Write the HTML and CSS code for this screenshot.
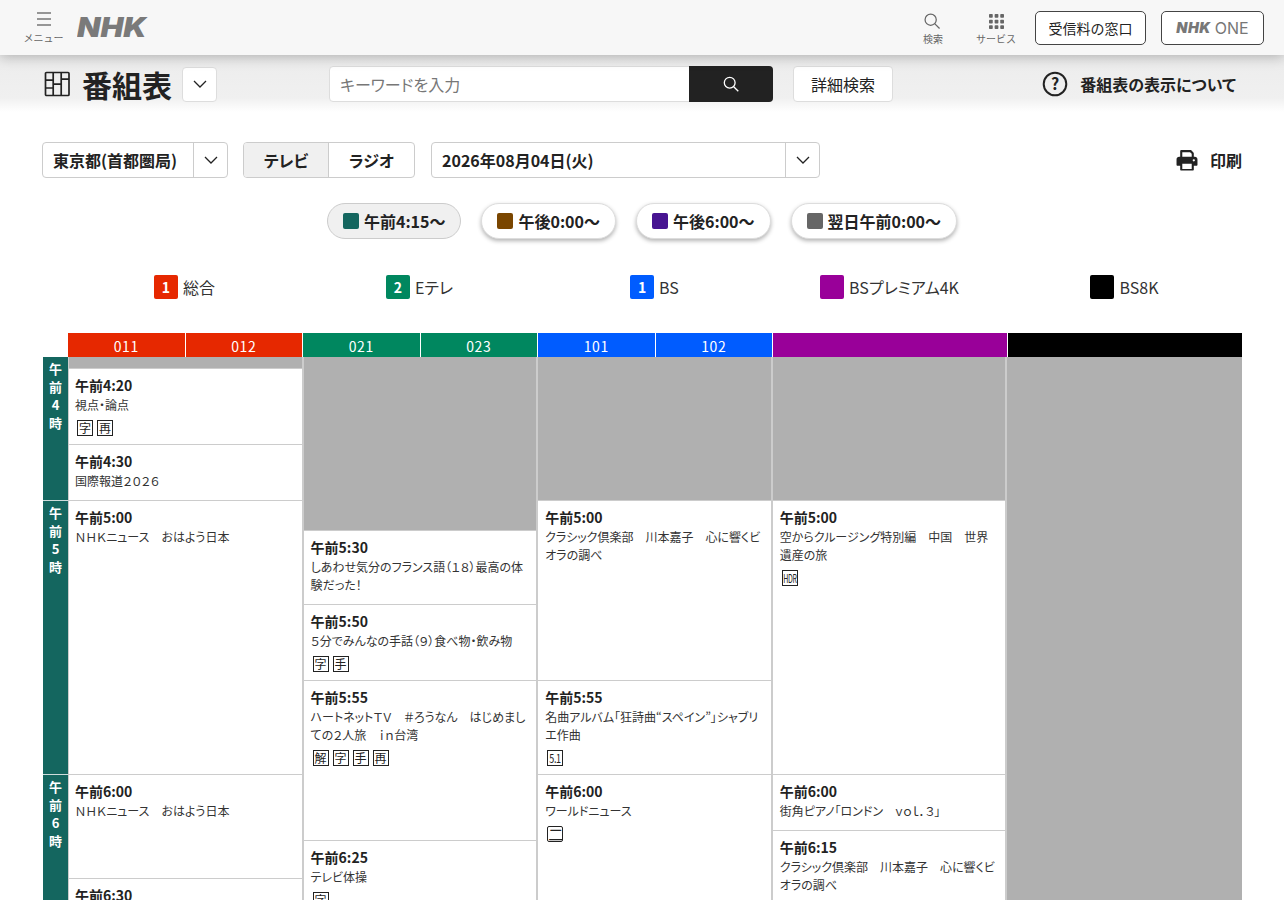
FILE: index.html
```html
<!DOCTYPE html>
<html lang="ja">
<head>
<meta charset="utf-8">
<title>番組表</title>
<link rel="stylesheet" href="styles.css">
</head>
<body>
<div class="page">
<header class="top">
  <div class="tool menu">
    <svg width="16" height="16" viewBox="0 0 16 16"><path d="M1 2h14M1 8h14M1 14h14" stroke="#777" stroke-width="1.3" fill="none"/></svg>
    <span>メニュー</span>
  </div>
  <span class="logo">NHK</span>
  <div class="top-right">
    <div class="tool t-search">
      <svg width="16" height="16" viewBox="0 0 18 18"><circle cx="7.500" cy="7.500" r="6.300" stroke="#666" stroke-width="1.400" fill="none"/><path d="M12 12l5.500 5.500" stroke="#666" stroke-width="1.400"/></svg>
      <span>検索</span>
    </div>
    <div class="tool t-service">
      <svg width="15" height="15" viewBox="0 0 16 16" fill="#666"><rect x="0" y="0" width="4" height="4" rx=".8"/><rect x="6" y="0" width="4" height="4" rx=".8"/><rect x="12" y="0" width="4" height="4" rx=".8"/><rect x="0" y="6" width="4" height="4" rx=".8"/><rect x="6" y="6" width="4" height="4" rx=".8"/><rect x="12" y="6" width="4" height="4" rx=".8"/><rect x="0" y="12" width="4" height="4" rx=".8"/><rect x="6" y="12" width="4" height="4" rx=".8"/><rect x="12" y="12" width="4" height="4" rx=".8"/></svg>
      <span>サービス</span>
    </div>
    <a class="top-btn fee">受信料の窓口</a>
    <a class="top-btn one"><b>NHK</b><span>ONE</span></a>
  </div>
</header>

<section class="sub">
  <svg class="tbl-icon" width="26" height="26" viewBox="0 0 26 26" fill="none" stroke="#222" stroke-width="1.700"><rect x="1.500" y="1.500" width="23.500" height="23" rx="1"/><path d="M9.200 1.500v23M17.200 1.500v23M1.500 9.200h7.700M1.500 17h7.700M9.200 13.200h8M17.200 8.200h7.800"/></svg>
  <h1>番組表</h1>
  <span class="chev-box title-chev"><svg class="chev" viewBox="0 0 14 8"><path d="M1 1l6 6 6-6"/></svg></span>
  <div class="search">
    <span class="ph">キーワードを入力</span>
    <span class="search-btn"><svg width="16" height="16" viewBox="0 0 16 16"><circle cx="6.700" cy="6.700" r="5.400" stroke="#fff" stroke-width="1.300" fill="none"/><path d="M10.700 10.700l4.600 4.600" stroke="#fff" stroke-width="1.300"/></svg></span>
  </div>
  <a class="detail">詳細検索</a>
  <a class="about">
    <svg width="26" height="26" viewBox="0 0 26 26"><circle cx="13" cy="13" r="11.300" stroke="#222" stroke-width="2" fill="none"/><text x="13" y="18.500" text-anchor="middle" class="q">?</text></svg>
    <span>番組表の表示について</span>
  </a>
</section>

<section class="controls">
  <div class="sel region"><span class="sel-text">東京都(首都圏局)</span><span class="sel-arrow"><svg class="chev" viewBox="0 0 14 8"><path d="M1 1l6 6 6-6"/></svg></span></div>
  <div class="seg"><span class="on">テレビ</span><span>ラジオ</span></div>
  <div class="sel date"><span class="sel-text">2026年08月04日(火)</span><span class="sel-arrow"><svg class="chev" viewBox="0 0 14 8"><path d="M1 1l6 6 6-6"/></svg></span></div>
  <a class="print">
    <svg width="22" height="22" viewBox="0 0 21 21" fill="#222"><path d="M4 8V2.200C4 1.500 4.500 1 5.200 1h8.600c.3 0 .6.100.8.300l2 2c.3.300.4.600.4.900V8h-2V4.500l-1.600-1.500H6v5z"/><path d="M3 7.500h15c1.400 0 2.500 1.100 2.500 2.500v5c0 .6-.4 1-1 1H17v3.500c0 .6-.4 1-1 1H5c-.6 0-1-.4-1-1V16H1.500c-.6 0-1-.4-1-1v-5c0-1.400 1.100-2.500 2.500-2.500zM6 14v5h9v-5zm11-4.300a1.100 1.100 0 1 0 0 2.200 1.100 1.100 0 0 0 0-2.200z" fill-rule="evenodd"/></svg>
    <span>印刷</span>
  </a>
</section>

<nav class="pills">
  <a class="pill on"><i class="sw c-am"></i>午前4:15〜</a>
  <a class="pill"><i class="sw c-noon"></i>午後0:00〜</a>
  <a class="pill"><i class="sw c-eve"></i>午後6:00〜</a>
  <a class="pill"><i class="sw c-night"></i>翌日午前0:00〜</a>
</nav>

<div class="legend">
  <div class="lg"><i class="lg-mark red">1</i>総合</div>
  <div class="lg"><i class="lg-mark green">2</i>Eテレ</div>
  <div class="lg"><i class="lg-mark blue">1</i>BS</div>
  <div class="lg"><i class="lg-mark purple"></i>BSプレミアム4K</div>
  <div class="lg"><i class="lg-mark black"></i>BS8K</div>
</div>

<div class="chhead">
  <div class="ch red"><span>011</span><span>012</span></div>
  <div class="ch green"><span>021</span><span>023</span></div>
  <div class="ch blue"><span>101</span><span>102</span></div>
  <div class="ch purple"></div>
  <div class="ch black"></div>
</div>

<div class="grid">
  <div class="times">
    <div class="hour h143">午前4時</div>
    <div class="hour h274">午前5時</div>
    <div class="hour h300">午前6時</div>
  </div>
  <div class="col first">
    <div class="none h11"></div>
    <article class="prog h76"><h3>午前4:20</h3><p>視点・論点</p><div class="tags"><i>字</i><i>再</i></div></article>
    <article class="prog h56"><h3>午前4:30</h3><p>国際報道２０２６</p></article>
    <article class="prog h274"><h3>午前5:00</h3><p>ＮＨＫニュース　おはよう日本</p></article>
    <article class="prog h104"><h3>午前6:00</h3><p>ＮＨＫニュース　おはよう日本</p></article>
    <article class="prog h200"><h3>午前6:30</h3></article>
  </div>
  <div class="col">
    <div class="none h173"></div>
    <article class="prog h74"><h3>午前5:30</h3><p>しあわせ気分のフランス語（１８）最高の体験だった！</p></article>
    <article class="prog h76"><h3>午前5:50</h3><p>５分でみんなの手話（９）食べ物・飲み物</p><div class="tags"><i>字</i><i>手</i></div></article>
    <article class="prog h160"><h3>午前5:55</h3><p>ハートネットＴＶ　＃ろうなん　はじめましての２人旅　ｉｎ台湾</p><div class="tags"><i>解</i><i>字</i><i>手</i><i>再</i></div></article>
    <article class="prog h200"><h3>午前6:25</h3><p>テレビ体操</p><div class="tags"><i>字</i></div></article>
  </div>
  <div class="col">
    <div class="none h143"></div>
    <article class="prog h180"><h3>午前5:00</h3><p>クラシック倶楽部　川本嘉子　心に響くビオラの調べ</p></article>
    <article class="prog h94"><h3>午前5:55</h3><p>名曲アルバム「狂詩曲“スペイン”」シャブリエ作曲</p><div class="tags"><i class="narrow"><span>5.1</span></i></div></article>
    <article class="prog h300"><h3>午前6:00</h3><p>ワールドニュース</p><div class="tags"><i class="ni">二</i></div></article>
  </div>
  <div class="col">
    <div class="none h143"></div>
    <article class="prog h274"><h3>午前5:00</h3><p>空からクルージング特別編　中国　世界遺産の旅</p><div class="tags"><i class="narrow hdr"><span>HDR</span></i></div></article>
    <article class="prog h56"><h3>午前6:00</h3><p>街角ピアノ「ロンドン　ｖｏｌ．３」</p></article>
    <article class="prog h200"><h3>午前6:15</h3><p>クラシック倶楽部　川本嘉子　心に響くビオラの調べ</p></article>
  </div>
  <div class="col last">
    <div class="none h717"></div>
  </div>
</div>
</div>
</body>
</html>
```

FILE: styles.css
```css
* { box-sizing: border-box; }
html, body { margin: 0; padding: 0; background: #fff; }
body { font-family: "Noto Sans CJK JP", "Noto Sans", sans-serif; color: #222; font-feature-settings: "palt"; }
h1, h3, p { margin: 0; }
i { font-style: normal; }
.page { height: 900px; overflow: hidden; position: relative; }

/* top bar */
.top { height: 55px; background: #f7f7f7; display: flex; align-items: center; padding: 0 20px 0 24px; box-shadow: 0 2px 12px rgba(0,0,0,.25); position: relative; z-index: 2; }
.tool { display: flex; flex-direction: column; align-items: center; font-size: 10px; line-height: 14px; color: #666; font-feature-settings: normal; white-space: nowrap; }
.tool svg { display: block; }
.menu { width: 39px; }
.menu svg { margin-bottom: 4px; }
.logo { margin-left: 14px; font-family: Inter, sans-serif; font-weight: 900; font-style: italic; font-size: 27px; color: #7a7a7a; line-height: 30px; width: 70px; transform: scaleX(1.13); transform-origin: left center; }
.top-right { margin-left: auto; display: flex; align-items: center; }
.t-search { width: 30px; padding-top: 3px; }
.t-search svg { margin-bottom: 3px; margin-left: -2px; }
.t-service { width: 50px; margin-left: 23px; padding-top: 4px; }
.t-service svg { margin-bottom: 3px; }
.top-btn { height: 34px; display: flex; align-items: center; justify-content: center; border: 1px solid #444; border-radius: 5px; background: #fff; font-size: 14px; color: #222; }
.fee { width: 111px; margin-left: 14px; font-feature-settings: normal; }
.one { width: 103px; margin-left: 15px; color: #777; gap: 4px; font-family: Inter, sans-serif; font-size: 16px; }
.one b { font-weight: 900; font-style: italic; font-size: 14.500px; letter-spacing: .5px; }

/* title band */
.sub { height: 57px; background: linear-gradient(#ececec, #f0f0f0 75%, #fff); display: flex; align-items: center; padding: 1px 48px 0 43px; }
.tbl-icon { display: block; flex: none; margin-left: 1px; margin-right: -1px; }
.sub h1 { font-size: 30px; line-height: 40px; font-weight: 700; margin-left: 13px; width: 88px; white-space: nowrap; }
.chev { width: 14px; height: 8px; display: block; fill: none; stroke: #222; stroke-width: 1.3; }
.chev-box { display: flex; align-items: center; justify-content: center; background: #fff; border: 1px solid #ddd; border-radius: 4px; }
.title-chev { width: 35px; height: 35px; margin-left: 12px; }
.search { margin-left: 112px; width: 444px; height: 36px; display: flex; background: #fff; border: 1px solid #ddd; border-radius: 4px; }
.ph { flex: 1; font-size: 16px; line-height: 34px; padding-left: 10px; color: #777; }
.search-btn { width: 84px; margin: -1px -1px -1px 0; background: #222; border-radius: 0 4px 4px 0; display: flex; align-items: center; justify-content: center; }
.detail { margin-left: 20px; width: 100px; height: 36px; display: flex; align-items: center; justify-content: center; background: #fff; border: 1px solid #ddd; border-radius: 4px; font-size: 16px; }
.about { margin-left: auto; display: flex; align-items: center; gap: 12px; font-size: 16px; font-weight: 700; }
.about svg { display: block; margin-left: 1px; }
.q { font-family: "Noto Sans CJK JP", sans-serif; font-size: 16px; font-weight: 700; fill: #222; }

/* controls */
.controls { margin-top: 30px; height: 36px; padding: 0 42px; display: flex; align-items: stretch; }
.sel { display: flex; background: #fff; border: 1px solid #ccc; border-radius: 4px; }
.sel-text { flex: 1; font-size: 16px; font-weight: 700; line-height: 34px; padding-left: 10px; white-space: nowrap; }
.sel-arrow { width: 34px; border-left: 1px solid #ccc; display: flex; align-items: center; justify-content: center; }
.region { width: 186px; }
.date { width: 389px; margin-left: 16px; }
.seg { margin-left: 15px; width: 172px; display: flex; border: 1px solid #ccc; border-radius: 4px; overflow: hidden; }
.seg span { flex: 1; text-align: center; font-size: 16px; font-weight: 700; line-height: 34px; }
.seg .on { background: #f0f0f0; border-right: 1px solid #ccc; flex: 0 0 85px; }
.print { margin-left: auto; display: flex; align-items: center; gap: 12px; font-size: 16px; font-weight: 700; }

/* time pills */
.pills { margin-top: 25px; height: 36px; display: flex; justify-content: center; gap: 20px; }
.pill { display: flex; align-items: center; gap: 5px; height: 36px; padding: 0 15px; border: 1px solid #ddd; border-radius: 18px; background: #fff; box-shadow: 0 2px 4px rgba(0,0,0,.3); font-size: 16px; font-weight: 700; white-space: nowrap; }
.pill.on { background: #f0f0f0; border-color: #ccc; box-shadow: none; }
.sw { width: 16px; height: 16px; border-radius: 2px; flex: none; }
.c-am { background: #14665f; }
.c-noon { background: #7a4600; }
.c-eve { background: #471491; }
.c-night { background: #666; }

/* channel legend */
.legend { margin: 36px 42px 0 67px; height: 24px; display: flex; }
.lg { flex: 1; display: flex; align-items: center; justify-content: center; gap: 5px; font-size: 16px; color: #333; white-space: nowrap; }
.lg-mark { width: 24px; height: 24px; border-radius: 2px; color: #fff; font-size: 14px; font-weight: 700; text-align: center; line-height: 24px; flex: none; }
.red { background: #e62800; }
.green { background: #00875f; }
.blue { background: #005cff; }
.purple { background: #990099; }
.black { background: #000; }

/* channel header */
.chhead { margin: 34px 42px 0 68px; height: 24px; display: flex; }
.ch { flex: 1; display: flex; color: #fff; font-size: 14px; line-height: 24px; text-align: center; border-right: 1px solid #fff; }
.ch:last-child { border-right: 0; }
.ch span { flex: 1; letter-spacing: .5px; padding-top: 1px; }
.ch span + span { border-left: 1px solid #fff; }

/* grid */
.grid { margin: 0 42px 0 43px; display: flex; align-items: flex-start; }
.times { width: 25px; flex: none; }
.hour { background: #14665f; color: #fff; font-size: 13px; font-weight: 700; line-height: 18px; text-align: center; word-break: break-all; padding: 3px 5px 0; border-top: 1px solid #cfdcdb; }
.hour:first-child { border-top: 0; }
.col { flex: 1; min-width: 0; border-right: 2px solid #ccc; background: #b0b0b0; }
.col.first { border-left: 1px solid #ccc; }
.col.last { border-color: #b0b0b0; }
.none { background: #b0b0b0; }
.prog { background: #fff; border-top: 1px solid #ccc; padding: 6px 6px 0 7px; overflow: hidden; }
.col.first .prog { padding-left: 6px; }
.prog h3 { font-size: 14px; line-height: 20px; font-weight: 700; color: #222; }
.prog p { font-size: 12px; line-height: 18px; color: #333; margin-top: 1px; }
.tags { display: flex; gap: 4px; margin-top: 6px; padding-left: 2px; }
.tags i { width: 16px; height: 16px; border: 1px solid #222; font-size: 12px; line-height: 14px; text-align: center; color: #222; overflow: hidden; flex: none; }
.tags .narrow span { display: block; font-size: 12px; transform: scaleX(.75); margin: 0 -6px; letter-spacing: -.4px; }
.tags .hdr span { transform: scaleX(.58); }
.tags .ni { border-radius: 2px; font-size: 15px; }

/* programme heights */
.h11 { height: 11px; }
.h56 { height: 56px; }
.h74 { height: 74px; }
.h76 { height: 76px; }
.h94 { height: 94px; }
.h104 { height: 104px; }
.h143 { height: 143px; }
.h160 { height: 160px; }
.h173 { height: 173px; }
.h180 { height: 180px; }
.h200 { height: 200px; }
.h274 { height: 274px; }
.h300 { height: 300px; }
.h717 { height: 717px; }
```
